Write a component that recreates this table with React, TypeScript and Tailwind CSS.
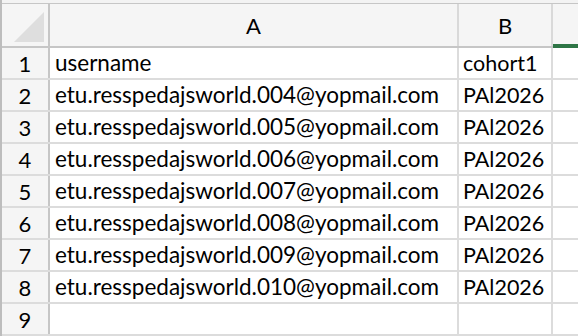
import React from 'react';

const rows = [
  ['username', 'cohort1'],
  ['etu.resspedajsworld.004@yopmail.com', 'PAl2026'],
  ['etu.resspedajsworld.005@yopmail.com', 'PAl2026'],
  ['etu.resspedajsworld.006@yopmail.com', 'PAl2026'],
  ['etu.resspedajsworld.007@yopmail.com', 'PAl2026'],
  ['etu.resspedajsworld.008@yopmail.com', 'PAl2026'],
  ['etu.resspedajsworld.009@yopmail.com', 'PAl2026'],
  ['etu.resspedajsworld.010@yopmail.com', 'PAl2026'],
  ['', ''],
];

export default function App() {
  return (
    <div
      className="flex h-[336px] w-[578px] overflow-hidden bg-white text-black"
      style={{ fontFamily: 'Lato, "Open Sans", sans-serif' }}
    >
      {/* frame edge */}
      <div className="w-[2px] shrink-0 bg-[#bdbdbd]" />
      <div className="flex min-w-0 flex-1 flex-col">
        <div className="h-[3px] shrink-0 bg-[#f3f3f3]" />
        {/* column headers */}
        <div className="flex h-[45px] shrink-0 border-t border-b-2 border-t-[#c6c6c6] border-b-[#c6c6c6] bg-[#f5f5f5]">
          <div className="relative w-[48px] shrink-0 border-r-2 border-[#c6c6c6]">
            <div className="absolute left-[12px] top-[8px] h-[30px] w-[30px] bg-[#dedede] [clip-path:polygon(100%_0,100%_100%,0_100%)]" />
          </div>
          <div className="flex w-[409px] shrink-0 items-center justify-center border-r-2 border-[#d9d9d9] text-[22px]">
            A
          </div>
          <div className="flex w-[94px] shrink-0 items-center justify-center border-r-2 border-[#d9d9d9] text-[22px]">
            B
          </div>
          <div className="relative flex-1">
            <div className="absolute bottom-[-2px] left-0 right-0 h-[4px] bg-[#2e7546]" />
          </div>
        </div>
        {/* data rows */}
        {rows.map((r, i) => (
          <div key={i} className="flex h-[32px] shrink-0 border-b-2 border-[#dcdcdc]">
            <div className="flex w-[48px] shrink-0 items-center justify-center border-r-2 border-[#c6c6c6] bg-[#f5f5f5] text-[22px]">
              {i + 1}
            </div>
            <div className="flex w-[409px] shrink-0 items-center border-r-2 border-[#dcdcdc] pl-[5px] text-[22.5px]">
              {r[0]}
            </div>
            <div className="flex w-[94px] shrink-0 items-center border-r-2 border-[#dcdcdc] pl-[4px] text-[21.5px]">
              {r[1]}
            </div>
            <div className="flex-1" />
          </div>
        ))}
      </div>
    </div>
  );
}
